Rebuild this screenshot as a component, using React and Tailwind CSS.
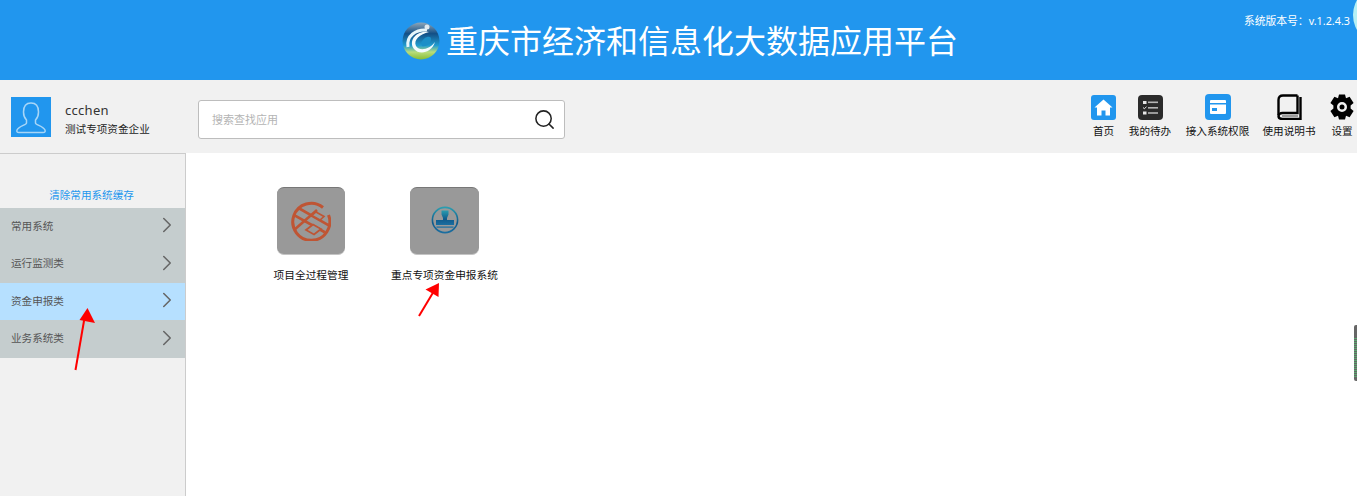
import React from 'react';
import { ChevronRight, Search } from 'lucide-react';

const FONT = "font-['Noto_Sans','Noto_Sans_CJK_SC',sans-serif]";

const menus = [
  { name: '常用系统', h: 'h-[37px]' },
  { name: '运行监测类', h: 'h-[38px]' },
  { name: '资金申报类', h: 'h-[37px]', active: true },
  { name: '业务系统类', h: 'h-[38px]' },
];

const Logo = () => (
  <svg width="38" height="38" viewBox="0 0 38 38" className="mr-[6px] shrink-0">
    <defs>
      <linearGradient id="ball" x1="0" y1="0" x2="0" y2="1">
        <stop offset="0" stopColor="#8fa6b8" />
        <stop offset="0.3" stopColor="#134f86" />
        <stop offset="0.62" stopColor="#1f9bd0" />
        <stop offset="0.8" stopColor="#b9dd7a" />
        <stop offset="1" stopColor="#86bd35" />
      </linearGradient>
    </defs>
    <circle cx="19" cy="19" r="18.5" fill="url(#ball)" />
    <path d="M6 25C4 14 14 7 25 8" fill="none" stroke="#e6f6fb" strokeWidth="3" />
    <path d="M27 10C14 8 6 19 12 27C18 34 30 30 33 20C28 27 18 30 14 24C11 18 18 12 27 10Z" fill="#f4fbfd" />
    <path d="M19 21C22 14 29 13 29 17C29 22 24 25 20 24Z" fill="#1b8fc8" />
    <circle cx="25" cy="5" r="2.5" fill="#dfe9ef" />
  </svg>
);

const HomeIcon = () => (
  <svg width="25" height="25" viewBox="0 0 25 25">
    <rect width="25" height="25" rx="3" fill="#2196ee" />
    <path d="M12.5 4.5L21.5 12.5H19V20.5H14.5V15.5H10.5V20.5H6V12.5H3.5Z" fill="#fff" />
  </svg>
);

const TodoIcon = () => (
  <svg width="25" height="25" viewBox="0 0 25 25">
    <rect width="25" height="25" rx="4" fill="#2b2b2b" />
    <rect x="5" y="6" width="3.5" height="3" fill="#e6e6e6" />
    <rect x="10" y="6.5" width="10" height="1.6" fill="#b5b5b5" />
    <path d="M5 12.5l1.3 1.2L8.5 11.8" fill="none" stroke="#e6e6e6" strokeWidth="1" />
    <rect x="10" y="12" width="10" height="1.6" fill="#b5b5b5" />
    <rect x="5" y="16.5" width="3.5" height="3" fill="#e6e6e6" />
    <rect x="10" y="17.2" width="10" height="1.6" fill="#b5b5b5" />
  </svg>
);

const AccessIcon = () => (
  <svg width="26" height="26" viewBox="0 0 26 26">
    <rect width="26" height="26" rx="4" fill="#2196ee" />
    <rect x="5" y="6" width="16" height="14" rx="1" fill="#fff" />
    <rect x="5" y="9" width="16" height="1.5" fill="#2196ee" />
    <rect x="7" y="14" width="5" height="3" fill="#2196ee" />
  </svg>
);

const BookIcon = () => (
  <svg width="25" height="26" viewBox="0 0 25 26" fill="none" stroke="#000">
    <path d="M20.5 1.5H6C3 1.5 1.5 3 1.5 6V21" strokeWidth="2.4" />
    <path d="M20.5 1.5V19H5.5C3 19 1.5 20.5 1.5 22C1.5 23.7 3 25 5.5 25H23.5V3" strokeWidth="2.4" />
    <path d="M5 22H21" stroke="#777" strokeWidth="1.4" />
  </svg>
);

const GearIcon = () => (
  <svg width="26" height="26" viewBox="0 0 26 26">
    <path
      fillRule="evenodd"
      fill="#000"
      d="M10 0.5H16L17 4.3L20.6 2.7L24.6 9L21.6 11.4V14.6L24.6 17L20.6 23.3L17 21.7L16 25.5H10L9 21.7L5.4 23.3L1.4 17L4.4 14.6V11.4L1.4 9L5.4 2.7L9 4.3ZM13 8A5 5 0 1 0 13 18A5 5 0 1 0 13 8ZM13 10.5A2.5 2.5 0 1 1 13 15.5A2.5 2.5 0 1 1 13 10.5Z"
    />
  </svg>
);

const tools = [
  { name: '首页', icon: <HomeIcon />, w: 'w-[25px]', mr: 'mr-[12px]' },
  { name: '我的待办', icon: <TodoIcon />, w: 'w-[44px]', mr: 'mr-[13px]' },
  { name: '接入系统权限', icon: <AccessIcon />, w: 'w-[65px]', mr: 'mr-[12px]' },
  { name: '使用说明书', icon: <BookIcon />, w: 'w-[54px]', mr: 'mr-[13px]' },
  { name: '设置', icon: <GearIcon />, w: 'w-[26px]', mr: 'mr-[2px]' },
];

const ProjectIcon = () => (
  <svg width="40" height="40" viewBox="0 0 40 40" fill="none" stroke="#bf5534" className="-mt-[1px]">
    <defs>
      <clipPath id="disc">
        <circle cx="20" cy="20" r="18" />
      </clipPath>
    </defs>
    <path d="M32 6.5A18.5 18.5 0 1 0 37.5 14" strokeWidth="3" />
    <g clipPath="url(#disc)">
      <path d="M1 13L37 33M4 5L39 25" strokeWidth="2.6" />
      <path d="M3 29L26 9" strokeWidth="2.6" />
    </g>
    <path d="M22 23.5L30 28L23 33.5L15 29Z" strokeWidth="1.8" fill="#999" />
    <path d="M25 11L33 15.5L29 19L21 14.5Z" strokeWidth="1.6" fill="#999" />
  </svg>
);

const StampIcon = () => (
  <svg width="28" height="28" viewBox="0 0 28 28" className="-mt-[2px]">
    <defs>
      <linearGradient id="stamp" x1="0" y1="0" x2="0" y2="1">
        <stop offset="0" stopColor="#2a9db0" />
        <stop offset="0.6" stopColor="#0f5a8c" />
        <stop offset="1" stopColor="#1b6ea0" />
      </linearGradient>
    </defs>
    <circle cx="14" cy="14" r="12.6" fill="none" stroke="url(#stamp)" strokeWidth="1.6" />
    <path d="M10.5 4.5H17.5V8.5L16 12V14H23V19H5V14H12V12L10.5 8.5Z" fill="url(#stamp)" />
    <rect x="5.5" y="20.5" width="17" height="1.2" fill="#1b6ea0" />
  </svg>
);

const apps = [
  { name: '项目全过程管理', icon: <ProjectIcon />, w: 'w-[68px]', box: 'w-[74px]', mr: 'mr-[43px]' },
  { name: '重点专项资金申报系统', icon: <StampIcon />, w: 'w-[69px]', box: 'w-[107px]', mr: '' },
];

export default function App() {
  return (
    <div className={`${FONT} relative flex h-screen flex-col overflow-hidden bg-white text-black`}>
      <header className="relative flex h-20 shrink-0 items-center justify-center bg-[#2196ee] pl-[3px] pt-[2px]">
        <Logo />
        <h1 className="text-[32px] font-normal leading-none whitespace-nowrap text-white">重庆市经济和信息化大数据应用平台</h1>
        <span className="absolute right-[7px] top-[13px] text-[10.8px] leading-[15px] text-white">系统版本号：v.1.2.4.3</span>
        <span className="absolute -right-[56px] -top-[15px] h-[60px] w-[60px] rounded-full bg-[#b5f0f5]" />
      </header>

      <div className="flex h-[73px] shrink-0 items-center bg-[#f1f1f1]">
        <div className="ml-[11px] flex h-10 w-10 items-center justify-center bg-[#2196ee]">
          <svg width="36" height="36" viewBox="0 0 36 36" fill="none" stroke="#a8d6f7" strokeWidth="1.5">
            <path d="M18 4C12.5 4 10.5 8 10.5 13C10.5 17 12 19.5 13.5 21V24C13.5 26 6 27 4 31C3.5 32.5 4 33.5 6 33.5H30C32 33.5 32.5 32.5 32 31C30 27 22.5 26 22.5 24V21C24 19.5 25.5 17 25.5 13C25.5 8 23.5 4 18 4Z" />
          </svg>
        </div>
        <div className="ml-[14px] mt-[5px] flex w-[133px] flex-col">
          <span className="-mt-[1px] text-[13px] leading-[18px] tracking-[0.3px] text-[#333]">ccchen</span>
          <span className="mt-[2px] text-[10.6px] leading-[16px] whitespace-nowrap text-[#222]">测试专项资金企业</span>
        </div>
        <div className="mt-[6px] flex h-[39px] w-[367px] items-center justify-between rounded-[3px] border border-[#bdbdbd] bg-white pl-[13px] pr-[8px]">
          <span className="mt-[1px] text-[11px] text-[#b4b4b4]">搜索查找应用</span>
          <Search size={23} strokeWidth={1.6} className="text-[#222]" />
        </div>
        <nav className="ml-auto flex items-start">
          {tools.map((t) => (
            <div key={t.name} className={`flex ${t.w} ${t.mr} flex-col items-center`}>
              <div className="flex h-[26px] items-center">{t.icon}</div>
              <span className="mt-[3px] text-[10.6px] leading-[16px] whitespace-nowrap text-[#111]">{t.name}</span>
            </div>
          ))}
        </nav>
      </div>

      <div className="flex min-h-0 flex-1">
        <aside className="w-[186px] shrink-0 border-r border-t border-[#cccccc] bg-[#f1f1f1] pt-[33px]">
          <div className="h-[21px] pr-[2px] text-center text-[10.6px] leading-4 text-[#2196ee]">清除常用系统缓存</div>
          {menus.map((m) => (
            <div
              key={m.name}
              className={`flex ${m.h} items-center justify-between pl-[11px] pr-[5px] ${m.active ? 'bg-[#b6e0ff]' : 'bg-[#c5cdce]'}`}
            >
              <span className="text-[10.6px] text-[#555]">{m.name}</span>
              <ChevronRight size={26} strokeWidth={1.4} className="-mt-[3px] text-[#666]" />
            </div>
          ))}
        </aside>

        <main className="flex flex-1 items-start pl-[88px] pt-[34px]">
          {apps.map((a) => (
            <div key={a.name} className={`flex ${a.box} ${a.mr} flex-col items-center`}>
              <div className={`flex h-[68px] ${a.w} items-center justify-center rounded-[7px] border-b border-t border-b-[#c4c4c4] border-t-[#777] bg-[#999999]`}>
                {a.icon}
              </div>
              <span className="mt-[12px] text-[10.7px] leading-4 whitespace-nowrap text-[#111]">{a.name}</span>
            </div>
          ))}
        </main>
      </div>

      {/* red annotation arrows drawn over the page */}
      <svg className="pointer-events-none absolute left-0 top-0" width="500" height="496" viewBox="0 0 500 496">
        <path d="M75.5 370L84.5 318" stroke="#ff0000" strokeWidth="2" />
        <path d="M87.5 308L95 323L79.5 320Z" fill="#ff0000" />
        <path d="M419 316L434 291" stroke="#ff0000" strokeWidth="2" />
        <path d="M439 283L438.5 297L425.5 289.5Z" fill="#ff0000" />
      </svg>

      {/* scroll handle stuck on the right edge */}
      <div className="absolute right-0 top-[325px] h-[56px] w-[3px] rounded-l-[2px] bg-[#666] pb-[3px] pt-[13px]">
        <div className="h-full w-full bg-[repeating-linear-gradient(#5aa56f_0px,#5aa56f_1px,#666_1px,#666_2px)]" />
      </div>
    </div>
  );
}
